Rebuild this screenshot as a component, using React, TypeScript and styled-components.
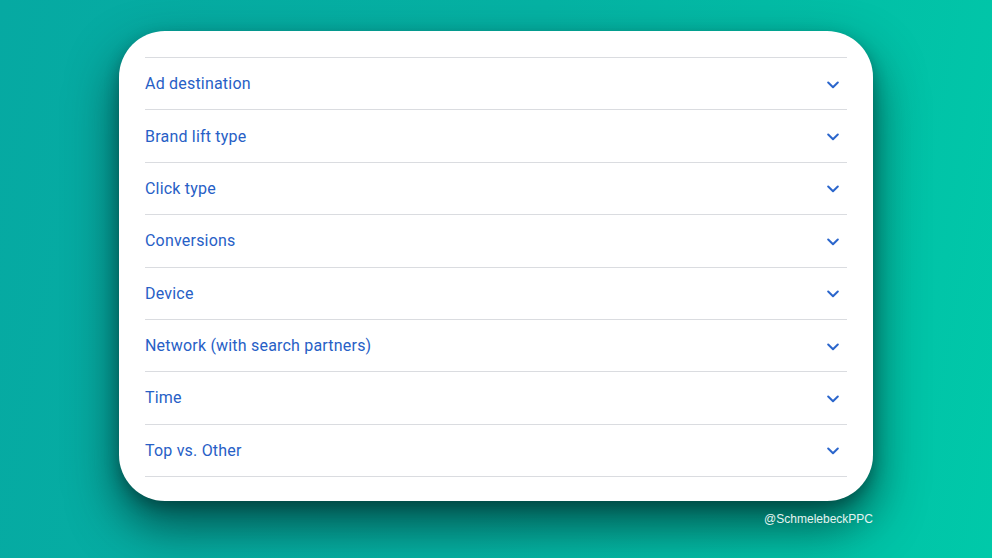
import React from 'react';
import styled, { createGlobalStyle } from 'styled-components';

const GlobalStyle = createGlobalStyle`
  html, body {
    margin: 0;
    padding: 0;
  }
  body {
    font-family: 'Roboto', 'Liberation Sans', Arial, sans-serif;
  }
`;

const Page = styled.div`
  width: 992px;
  height: 558px;
  box-sizing: border-box;
  padding-top: 31px;
  display: flex;
  flex-direction: column;
  align-items: center;
  background: linear-gradient(100deg, #06a9a2 0%, #05b3a4 50%, #00c9a9 100%);
  overflow: hidden;
`;

const Card = styled.div`
  width: 754px;
  height: 470px;
  box-sizing: border-box;
  padding: 26px 26px 0 26px;
  background: #ffffff;
  border-radius: 46px;
  box-shadow: 0 24px 50px rgba(0, 35, 35, 0.7), 0 6px 14px rgba(0, 40, 40, 0.35);
`;

const List = styled.ul`
  list-style: none;
  margin: 0;
  padding: 0;
  border-bottom: 1px solid #dadce0;
`;

const Row = styled.li`
  box-sizing: border-box;
  height: 52.375px;
  border-top: 1px solid #dadce0;
  display: flex;
  align-items: center;
  justify-content: space-between;
  padding-right: 8px;
  cursor: pointer;
`;

const Label = styled.span`
  font-size: 16px;
  color: #2760c6;
  letter-spacing: 0.2px;
`;

const Chevron = styled.svg`
  width: 12px;
  height: 8px;
  margin-top: 2px;
`;

const Watermark = styled.div`
  width: 754px;
  text-align: right;
  margin-top: 11px;
  font-family: 'Liberation Sans', Arial, sans-serif;
  font-size: 12px;
  color: #e6f4f1;
`;

const items = [
  'Ad destination',
  'Brand lift type',
  'Click type',
  'Conversions',
  'Device',
  'Network (with search partners)',
  'Time',
  'Top vs. Other',
];

export default function App() {
  return (
    <>
      <GlobalStyle />
      <Page>
        <Card>
          <List>
            {items.map((item) => (
              <Row key={item}>
                <Label>{item}</Label>
                <Chevron viewBox="0 0 12 8">
                  <polyline
                    points="1.2,1.5 6,6.2 10.8,1.5"
                    fill="none"
                    stroke="#2b66cc"
                    strokeWidth="2"
                    strokeLinecap="round"
                    strokeLinejoin="round"
                  />
                </Chevron>
              </Row>
            ))}
          </List>
        </Card>
        <Watermark>@SchmelebeckPPC</Watermark>
      </Page>
    </>
  );
}
